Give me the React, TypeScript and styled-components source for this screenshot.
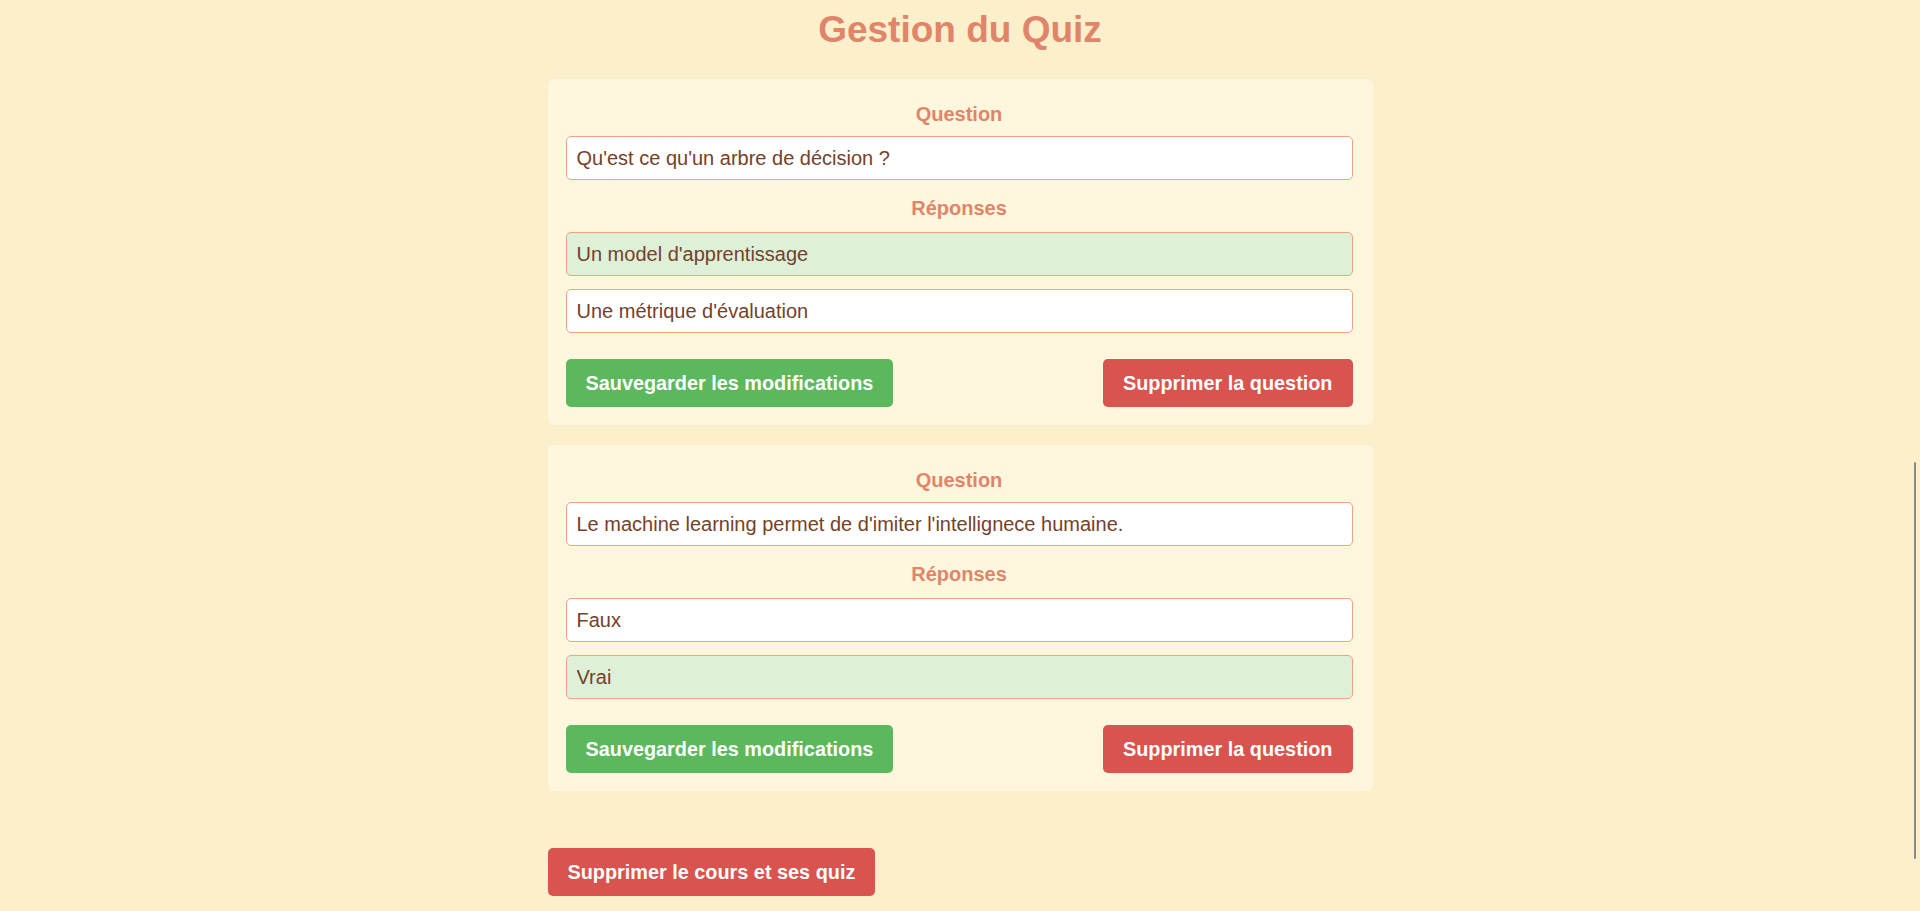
import React from "react";
import styled, { createGlobalStyle } from "styled-components";

const GlobalStyle = createGlobalStyle`
  html, body {
    margin: 0;
    padding: 0;
    background: #fcefcc;
    overflow: hidden;
  }
  body {
    font-family: "Liberation Sans", Arial, sans-serif;
  }
  * { box-sizing: border-box; }
`;

const Page = styled.main`
  width: 825px;
  margin: 0 auto;
  display: flex;
  flex-direction: column;
`;

const Title = styled.h1`
  margin: 9px 0 28px;
  font-size: 37px;
  line-height: 42px;
  font-weight: 700;
  text-align: center;
  color: #e1856a;
`;

const CardList = styled.div`
  display: flex;
  flex-direction: column;
  gap: 20px;
`;

const Card = styled.section`
  background: #fef7de;
  border-radius: 6px;
  padding: 24px 20px 18px 18px;
  display: flex;
  flex-direction: column;
`;

const Label = styled.h3<{ $top?: number }>`
  margin: ${(p) => p.$top ?? 0}px 0 10px;
  font-size: 20px;
  line-height: 23px;
  font-weight: 700;
  text-align: center;
  color: #e1856a;
`;

const TextField = styled.input<{ $correct?: boolean; $gap?: number }>`
  display: block;
  width: 100%;
  height: 44px;
  margin: ${(p) => p.$gap ?? 0}px 0 0;
  padding: 0 10px;
  border: 1px solid #f2a27f;
  border-radius: 5px;
  background: ${(p) => (p.$correct ? "#dff0d8" : "#ffffff")};
  color: #74422a;
  font-family: "Liberation Sans", Arial, sans-serif;
  font-size: 20px;
  outline: none;
`;

const ButtonRow = styled.div`
  display: flex;
  justify-content: space-between;
  margin-top: 26px;
`;

const Button = styled.button<{ $variant: "success" | "danger" }>`
  height: 48px;
  padding: 0 20px;
  border: none;
  border-radius: 5px;
  background: ${(p) => (p.$variant === "success" ? "#5cb85c" : "#d9534f")};
  color: #ffffff;
  font-family: "Liberation Sans", Arial, sans-serif;
  font-size: 19.85px;
  font-weight: 700;
  line-height: 24px;
  cursor: pointer;
`;

const Footer = styled.div`
  margin-top: 57px;
  display: flex;
`;

const ScrollThumb = styled.div`
  position: fixed;
  right: 4px;
  top: 462px;
  width: 2px;
  height: 397px;
  background: #8c8a86;
  border-radius: 1px;
`;

type Question = {
  text: string;
  answers: { text: string; correct: boolean }[];
};

const questions: Question[] = [
  {
    text: "Qu'est ce qu'un arbre de décision ?",
    answers: [
      { text: "Un model d'apprentissage", correct: true },
      { text: "Une métrique d'évaluation", correct: false },
    ],
  },
  {
    text: "Le machine learning permet de d'imiter l'intellignece humaine.",
    answers: [
      { text: "Faux", correct: false },
      { text: "Vrai", correct: true },
    ],
  },
];

export default function App() {
  return (
    <>
      <GlobalStyle />
      <Page>
        <Title>Gestion du Quiz</Title>
        <CardList>
          {questions.map((q, i) => (
            <Card key={i}>
              <Label>Question</Label>
              <TextField defaultValue={q.text} />
              <Label $top={17}>Réponses</Label>
              {q.answers.map((a, j) => (
                <TextField
                  key={j}
                  defaultValue={a.text}
                  $correct={a.correct}
                  $gap={j === 0 ? 2 : 13}
                />
              ))}
              <ButtonRow>
                <Button $variant="success">Sauvegarder les modifications</Button>
                <Button $variant="danger">Supprimer la question</Button>
              </ButtonRow>
            </Card>
          ))}
        </CardList>
        <Footer>
          <Button $variant="danger">Supprimer le cours et ses quiz</Button>
        </Footer>
      </Page>
      <ScrollThumb />
    </>
  );
}
